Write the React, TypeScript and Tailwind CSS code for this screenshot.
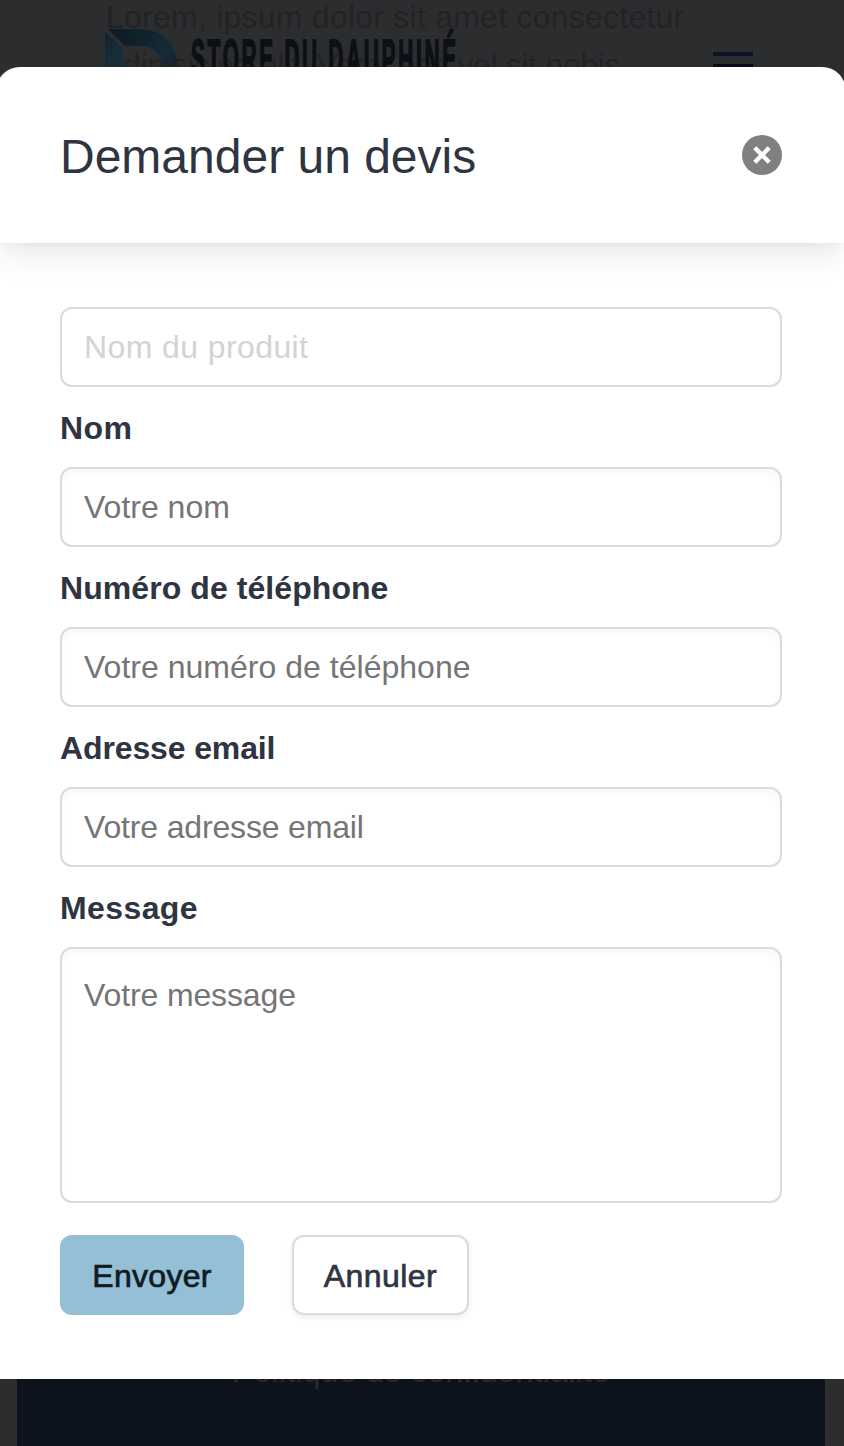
import type { ReactNode } from 'react';

const controlStyle =
  'block w-full border-2 border-[#d8dbe2] rounded-xl px-[22px] bg-white text-[32px] leading-10 text-[#2e3440] outline-none';
const insetShadow = 'shadow-[inset_0_4px_6px_rgba(0,0,0,0.03)]';

function Label({ children, spacing }: { children: ReactNode; spacing: string }) {
  return (
    <label className={`flex h-20 items-center pt-0.5 text-[32px] font-bold text-[#2e3440] ${spacing}`}>
      {children}
    </label>
  );
}

function LogoMark() {
  return (
    <svg className="block h-[67px] w-[76px]" viewBox="105 29 76 67" aria-hidden="true">
      <defs>
        <linearGradient id="bowl" x1="0" y1="0" x2="1" y2="0.5">
          <stop offset="0" stopColor="#0f1a20" />
          <stop offset="0.45" stopColor="#10222c" />
          <stop offset="0.8" stopColor="#152c38" />
          <stop offset="1" stopColor="#11232d" />
        </linearGradient>
        <linearGradient id="stem" x1="0" y1="0" x2="0.4" y2="1">
          <stop offset="0" stopColor="#12232e" />
          <stop offset="0.5" stopColor="#172d39" />
        </linearGradient>
      </defs>
      <path d="M108 29H140C162 29 177 44 178 67V96H165V70C162 56 154 46 143 46H125Z" fill="url(#bowl)" />
      <path d="M105 31.5L123 48.5V96H105Z" fill="url(#stem)" />
    </svg>
  );
}

function PageBehind() {
  return (
    <div className="col-start-1 row-start-1 flex h-[1446px] flex-col justify-between overflow-hidden bg-[#2c2d2f]">
      <div className="relative h-24">
        <header className="absolute inset-x-0 top-[29px] flex items-start">
          <div className="ml-[105px]">
            <LogoMark />
          </div>
          <span className="relative z-[2] ml-[10px] block w-[522px] origin-left scale-x-[0.4] whitespace-nowrap text-[52px] font-bold leading-[58px] tracking-[6.8px] text-[#0c0f16] [-webkit-text-stroke:2px_#0c0f16]">
            STORE DU DAUPHINÉ
          </span>
          <div className="absolute left-[713px] top-[23px] flex w-10 flex-col gap-2">
            <span className="h-1 bg-[#0b1324]" />
            <span className="h-1 bg-[#060a1a]" />
            <span className="h-1 bg-[#0b1324]" />
          </div>
        </header>
        <div className="relative z-[1] pl-[106px] text-[32px] leading-[48px] text-[#222325]">
          <p className="-mt-[7px] tracking-[0.24px]">Lorem, ipsum dolor sit amet consectetur</p>
          <p className="pl-[17px] tracking-[-0.33px]">dipisicing elit. Vero, eos vel sit nobis</p>
        </div>
      </div>
      <footer className="ml-[17px] mr-[19px] h-[100px] bg-[#0d131c] text-center text-[32px] leading-[50px] tracking-[0.22px] text-[#2a2b2d]">
        Politique de confidentialité
      </footer>
    </div>
  );
}

export default function App() {
  return (
    <main className="grid h-[1446px] w-[844px] grid-cols-1 overflow-hidden font-['Liberation_Sans',Arial,sans-serif]">
      <PageBehind />
      <section
        role="dialog"
        className="z-10 col-start-1 row-start-1 -ml-1 -mr-0.5 mt-[67px] h-[1312px] overflow-hidden rounded-t-3xl bg-white"
      >
        <div className="flex h-44 items-center justify-between pl-16 pr-16 shadow-[0_20px_30px_-6px_rgba(0,0,0,0.08),0_8px_12px_-4px_rgba(0,0,0,0.03),0_0_2px_rgba(0,0,0,0.05)]">
          <h1 className="pt-1 text-[48px] leading-[56px] text-[#2e3440]">Demander un devis</h1>
          <button aria-label="Fermer" className="size-10 rounded-full bg-[#808080]">
            <svg viewBox="0 0 40 40" className="size-10" fill="none" stroke="white" strokeWidth="4.4">
              <path d="M12.8 12.8L27.2 27.2M27.2 12.8L12.8 27.2" />
            </svg>
          </button>
        </div>
        <form className="pl-16 pr-16 pt-16">
          <input
            disabled
            placeholder="Nom du produit"
            className={`${controlStyle} h-20 tracking-[0.4px] placeholder:text-[#d3d3d3] placeholder:opacity-100`}
          />
          <Label spacing="tracking-[0.4px]">Nom</Label>
          <input
            placeholder="Votre nom"
            className={`${controlStyle} ${insetShadow} h-20 placeholder:text-[#757575] placeholder:opacity-100`}
          />
          <Label spacing="tracking-[0.07px]">Numéro de téléphone</Label>
          <input
            placeholder="Votre numéro de téléphone"
            className={`${controlStyle} ${insetShadow} h-20 tracking-[0.02px] placeholder:text-[#757575] placeholder:opacity-100`}
          />
          <Label spacing="tracking-[-0.13px]">Adresse email</Label>
          <input
            placeholder="Votre adresse email"
            className={`${controlStyle} ${insetShadow} h-20 tracking-[-0.16px] placeholder:text-[#757575] placeholder:opacity-100`}
          />
          <Label spacing="tracking-[0.4px]">Message</Label>
          <textarea
            placeholder="Votre message"
            className={`${controlStyle} ${insetShadow} h-64 resize-none pt-[26px] tracking-[-0.12px] placeholder:text-[#757575] placeholder:opacity-100`}
          />
          <div className="mt-8 flex gap-12">
            <button className="h-20 w-[184px] rounded-xl bg-[#94bfd7] pt-0.5 text-[32px] tracking-[0.3px] text-[#101b22] [-webkit-text-stroke:0.7px_#101b22]">
              Envoyer
            </button>
            <button className="h-20 w-[177px] rounded-xl border-2 border-[#d8dbe2] bg-white pt-0.5 text-[32px] tracking-[0.45px] text-[#2e3440] shadow-[0_2px_6px_rgba(0,0,0,0.08)] [-webkit-text-stroke:0.7px_#2e3440]">
              Annuler
            </button>
          </div>
        </form>
      </section>
    </main>
  );
}
